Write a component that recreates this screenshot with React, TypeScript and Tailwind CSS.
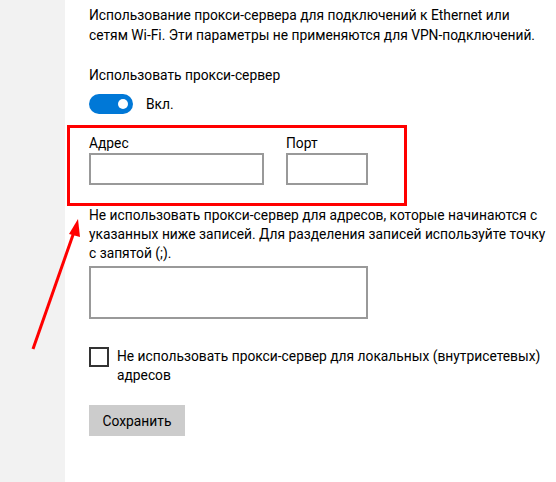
export default function App() {
  return (
    <div
      className="relative flex h-[482px] w-[556px] overflow-hidden bg-white text-[13.8px] leading-[20px] text-black"
      style={{ fontFamily: 'Roboto, "Noto Sans", sans-serif' }}
    >
      <div className="w-[65px] shrink-0 bg-[#f2f2f2]" />
      <div className="flex w-[491px] shrink-0 flex-col whitespace-nowrap pl-[24px] pt-[5px]">
        <p>
          Использование прокси-сервера для подключений к Ethernet или
          <br />
          сетям Wi-Fi. Эти параметры не применяются для VPN-подключений.
        </p>

        <p className="mt-[20px]">Использовать прокси-сервер</p>

        <div className="mt-[9px] flex items-center gap-[13px]">
          <div className="flex h-[20px] w-[44px] items-center justify-end rounded-full bg-[#0078d7] pr-[5px]">
            <div className="h-[10px] w-[10px] rounded-full bg-white" />
          </div>
          <span>Вкл.</span>
        </div>

        <div className="-ml-[22px] mt-[11px] flex w-[340px] gap-[22px] border-[3px] border-[#ff0000] pb-[18px] pl-[19px] pt-[5px]">
          <div className="flex flex-col">
            <span>Адрес</span>
            <div className="h-[32px] w-[175px] border-2 border-[#999999] bg-white" />
          </div>
          <div className="flex flex-col">
            <span>Порт</span>
            <div className="h-[32px] w-[82px] border-2 border-[#999999] bg-white" />
          </div>
        </div>

        <p className="leading-[19px]">
          Не использовать прокси-сервер для адресов, которые начинаются с
          <br />
          указанных ниже записей. Для разделения записей используйте точку
          <br />с запятой (;).
        </p>

        <div className="mt-[3px] h-[53px] w-[279px] border-2 border-[#999999] bg-white" />

        <div className="mt-[28px] flex gap-[8px]">
          <div className="h-[20px] w-[20px] shrink-0 border-2 border-[#333333]" />
          <p className="leading-[19px]">
            Не использовать прокси-сервер для локальных (внутрисетевых)
            <br />
            адресов
          </p>
        </div>

        <button className="mt-[20px] h-[31px] w-[96px] bg-[#cccccc] text-center">Сохранить</button>
      </div>

      <svg className="pointer-events-none absolute left-0 top-0" width="556" height="482">
        <line x1="33" y1="349" x2="74" y2="232" stroke="#ff0000" strokeWidth="3" />
        <polygon points="78,219 69,234 80,237" fill="#ff0000" />
      </svg>
    </div>
  );
}
